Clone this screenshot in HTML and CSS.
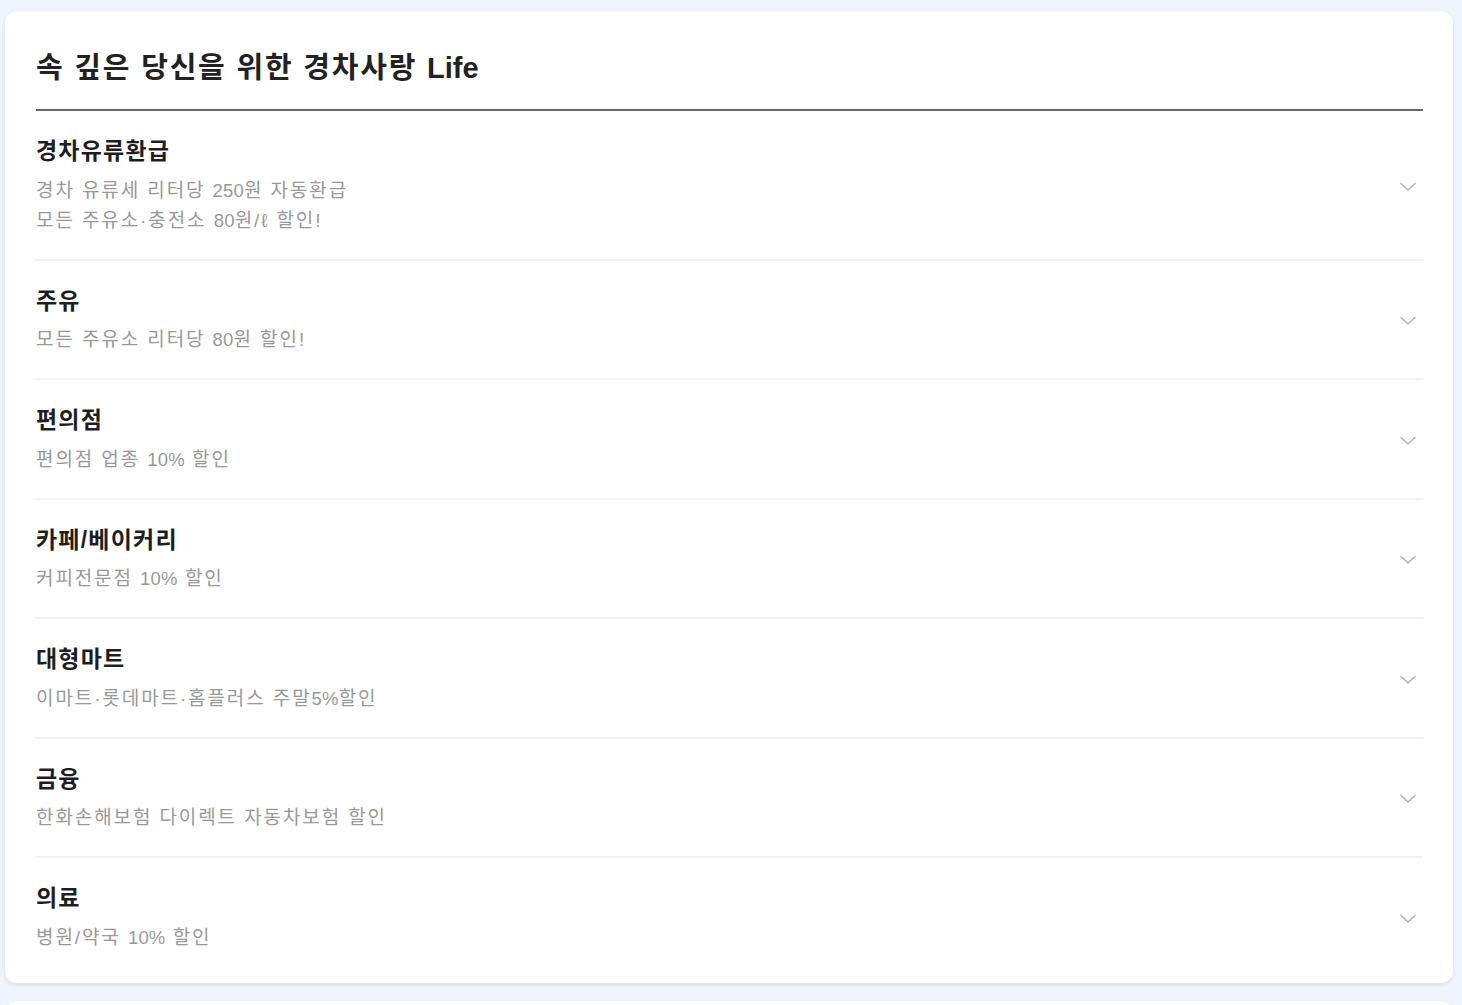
FILE: index.html
```html
<!DOCTYPE html>
<html lang="ko">
<head>
<meta charset="utf-8">
<title>경차사랑 Life</title>
<link rel="stylesheet" href="styles.css">
</head>
<body>
<main class="page">
  <section class="card">
    <h2 class="card-title">속 깊은 당신을 위한 경차사랑 <span class="latin">Life</span></h2>
    <ul class="list">
      <li class="item">
        <div class="item-text">
          <h3 class="item-title">경차유류환급</h3>
          <p class="item-desc">경차 유류세 리터당 <span class="num">250</span>원 자동환급<br>모든 주유소·충전소 <span class="num">80</span>원/ℓ 할인!</p>
        </div>
        <svg class="chev" width="18" height="10" viewBox="0 0 18 10"><path d="M2 1.5 L9 8 L16 1.5" fill="none" stroke="#b3b3b3" stroke-width="1.6" stroke-linecap="round" stroke-linejoin="round"/></svg>
      </li>
      <li class="item">
        <div class="item-text">
          <h3 class="item-title">주유</h3>
          <p class="item-desc">모든 주유소 리터당 <span class="num">80</span>원 할인!</p>
        </div>
        <svg class="chev" width="18" height="10" viewBox="0 0 18 10"><path d="M2 1.5 L9 8 L16 1.5" fill="none" stroke="#b3b3b3" stroke-width="1.6" stroke-linecap="round" stroke-linejoin="round"/></svg>
      </li>
      <li class="item">
        <div class="item-text">
          <h3 class="item-title">편의점</h3>
          <p class="item-desc">편의점 업종 <span class="num">10%</span> 할인</p>
        </div>
        <svg class="chev" width="18" height="10" viewBox="0 0 18 10"><path d="M2 1.5 L9 8 L16 1.5" fill="none" stroke="#b3b3b3" stroke-width="1.6" stroke-linecap="round" stroke-linejoin="round"/></svg>
      </li>
      <li class="item">
        <div class="item-text">
          <h3 class="item-title">카페/베이커리</h3>
          <p class="item-desc">커피전문점 <span class="num">10%</span> 할인</p>
        </div>
        <svg class="chev" width="18" height="10" viewBox="0 0 18 10"><path d="M2 1.5 L9 8 L16 1.5" fill="none" stroke="#b3b3b3" stroke-width="1.6" stroke-linecap="round" stroke-linejoin="round"/></svg>
      </li>
      <li class="item">
        <div class="item-text">
          <h3 class="item-title">대형마트</h3>
          <p class="item-desc">이마트·롯데마트·홈플러스 주말<span class="num">5%</span>할인</p>
        </div>
        <svg class="chev" width="18" height="10" viewBox="0 0 18 10"><path d="M2 1.5 L9 8 L16 1.5" fill="none" stroke="#b3b3b3" stroke-width="1.6" stroke-linecap="round" stroke-linejoin="round"/></svg>
      </li>
      <li class="item">
        <div class="item-text">
          <h3 class="item-title">금융</h3>
          <p class="item-desc">한화손해보험 다이렉트 자동차보험 할인</p>
        </div>
        <svg class="chev" width="18" height="10" viewBox="0 0 18 10"><path d="M2 1.5 L9 8 L16 1.5" fill="none" stroke="#b3b3b3" stroke-width="1.6" stroke-linecap="round" stroke-linejoin="round"/></svg>
      </li>
      <li class="item">
        <div class="item-text">
          <h3 class="item-title">의료</h3>
          <p class="item-desc">병원/약국 <span class="num">10%</span> 할인</p>
        </div>
        <svg class="chev" width="18" height="10" viewBox="0 0 18 10"><path d="M2 1.5 L9 8 L16 1.5" fill="none" stroke="#b3b3b3" stroke-width="1.6" stroke-linecap="round" stroke-linejoin="round"/></svg>
      </li>
    </ul>
  </section>
  <section class="card card-next"></section>
</main>
</body>
</html>
```

FILE: styles.css
```css
html, body {
  margin: 0;
  padding: 0;
  background: #eff4fd;
  overflow: hidden;
}
body {
  font-family: "Liberation Sans", "Noto Sans CJK KR", sans-serif;
  color: #222;
}
.page {
  padding: 11px 9px 0 5px;
  display: flex;
  flex-direction: column;
  gap: 18px;
}
.card {
  background: #fff;
  border-radius: 12px;
  box-shadow: 0 2px 4px rgba(40, 60, 100, 0.10);
  padding: 37px 30px 7px 30px;
}
.card-next {
  height: 200px;
  padding: 0;
}
.card-title {
  margin: 0 0 0 1px;
  font-size: 29px;
  line-height: 40px;
  font-weight: 700;
  color: #222;
  letter-spacing: 1.8px;
  padding-bottom: 21px;
  border-bottom: 2px solid #666;
}
.card-title .latin {
  letter-spacing: 0;
}
.list {
  list-style: none;
  margin: 0;
  padding: 0;
}
.item {
  display: flex;
  align-items: center;
  justify-content: space-between;
  padding: 25px 0 23px;
  border-bottom: 2px solid #eff2f7;
}
.item:last-child {
  border-bottom: none;
}
.item-text {
  display: flex;
  flex-direction: column;
  gap: 9.5px;
}
.item-title {
  margin: 0 0 0 1px;
  font-size: 23px;
  line-height: 30px;
  font-weight: 700;
  color: #1e1e1e;
  letter-spacing: 1.2px;
}
.item-desc {
  margin: 0 0 0 1px;
  font-size: 19px;
  line-height: 30px;
  color: #999;
  letter-spacing: 1.9px;
}
.item-desc .num {
  font-size: 18.5px;
  letter-spacing: 0.2px;
}
.chev {
  margin-right: 6px;
  margin-top: 2px;
  flex-shrink: 0;
}
```
